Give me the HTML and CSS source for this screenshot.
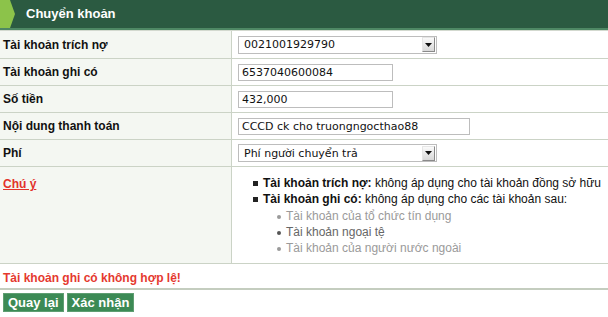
FILE: index.html
```html
<!DOCTYPE html>
<html lang="vi">
<head>
    <meta charset="UTF-8">
    <title>Chuyển khoản</title>
    <meta name="viewport" content="width=device-width, initial-scale=1.0">
    <link rel="stylesheet" href="styles.css">
</head>
<body>
    <div class="panel-head">
        <span class="tab"></span>
        <h2>Chuyển khoản</h2>
    </div>
    <div class="form">
        <div class="row first">
            <div class="label">Tài khoản trích nợ</div>
            <div class="value">
                <div class="select wide">
                    <span>0021001929790</span>
                    <span class="arrow"><svg width="7" height="4" viewBox="0 0 7 4"><path d="M0 0H7L3.5 4Z" fill="#111"/></svg></span>
                </div>
            </div>
        </div>
        <div class="row">
            <div class="label">Tài khoản ghi có</div>
            <div class="value"><input type="text" class="field" value="6537040600084"></div>
        </div>
        <div class="row">
            <div class="label">Số tiền</div>
            <div class="value"><input type="text" class="field" value="432,000"></div>
        </div>
        <div class="row">
            <div class="label">Nội dung thanh toán</div>
            <div class="value"><input type="text" class="field long" value="CCCD ck cho truongngocthao88"></div>
        </div>
        <div class="row">
            <div class="label">Phí</div>
            <div class="value">
                <div class="select wide">
                    <span>Phí người chuyển trả</span>
                    <span class="arrow"><svg width="7" height="4" viewBox="0 0 7 4"><path d="M0 0H7L3.5 4Z" fill="#111"/></svg></span>
                </div>
            </div>
        </div>
        <div class="row notes-row">
            <div class="label"><a href="#" class="note-link">Chú ý</a></div>
            <div class="value">
                <ul class="notes">
                    <li><b>Tài khoản trích nợ:</b> không áp dụng cho tài khoản đồng sở hữu</li>
                    <li><b>Tài khoản ghi có:</b> không áp dụng cho các tài khoản sau:
                        <ul class="sub">
                            <li>Tài khoản của tổ chức tín dụng</li>
                            <li class="dark">Tài khoản ngoại tệ</li>
                            <li>Tài khoản của người nước ngoài</li>
                        </ul>
                    </li>
                </ul>
            </div>
        </div>
    </div>
    <div class="error">Tài khoản ghi có không hợp lệ!</div>
    <div class="actions">
        <button type="button">Quay lại</button>
        <button type="button">Xác nhận</button>
    </div>
</body>
</html>
```

FILE: styles.css
```css
html { box-sizing: border-box; }
*, *:before, *:after { box-sizing: inherit; }
body {
    margin: 0;
    width: 608px;
    font-family: "Liberation Sans", Arial, sans-serif;
    font-size: 12px;
    color: #111;
    background: #fff;
}
.panel-head {
    position: relative;
    height: 30px;
    background: #2b5a41;
    border-bottom: 2px solid #4e8864;
}
.tab {
    position: absolute;
    left: 0;
    top: 0;
    width: 15px;
    height: 28px;
    background: #8cc34a;
    clip-path: polygon(0 0, 10px 0, 15px 14px, 10px 28px, 0 28px);
}
.panel-head h2 {
    margin: 0;
    padding-left: 26px;
    line-height: 28px;
    font-size: 13px;
    font-weight: bold;
    color: #fff;
}
.form {
    border-top: 1px solid #d3d9cf;
}
.row {
    display: grid;
    grid-template-columns: 232px 1fr;
    height: 27px;
    border-bottom: 1px solid #cbd3c6;
}
.row.first { height: 28px; }
.label {
    background: #f4f7f2;
    border-right: 1px solid #cbd3c6;
    padding-left: 3px;
    font-weight: bold;
    display: flex;
    align-items: center;
}
.value {
    padding-left: 6px;
    display: flex;
    align-items: center;
}
.field {
    width: 155px;
    height: 17px;
    margin: 0;
    padding: 0 3px;
    border: 1px solid #bdbdbd;
    font-family: "DejaVu Sans", Verdana, sans-serif;
    font-size: 11px;
    color: #111;
    background: #fff;
}
.field.long { width: 232px; }
.select {
    height: 18px;
    border: 1px solid #bdbdbd;
    display: flex;
    align-items: center;
    justify-content: space-between;
    padding-left: 5px;
    font-family: "DejaVu Sans", Verdana, sans-serif;
    font-size: 11px;
    color: #111;
    background: #fff;
}
.select.wide { width: 199px; }
.arrow {
    width: 13px;
    height: 15px;
    margin-right: 1px;
    background: linear-gradient(#fafafa, #d8d8d8);
    border: 1px solid #e6e6e6;
    border-right-color: #8a8a8a;
    border-bottom-color: #8a8a8a;
    display: flex;
    align-items: center;
    justify-content: center;
}
.notes-row { height: 97px; }
.notes-row .label,
.notes-row .value { align-items: flex-start; }
.notes-row .label { padding-top: 10px; }
.note-link {
    color: #e2332b;
    font-weight: bold;
}
.notes {
    margin: 0;
    padding: 8px 0 0 10px;
    list-style: none;
    line-height: 16.3px;
}
.notes > li {
    position: relative;
    padding-left: 15px;
}
.notes > li:before {
    content: "";
    position: absolute;
    left: 5px;
    top: 6px;
    width: 5px;
    height: 5px;
    background: #222;
}
.sub {
    margin: 0;
    padding: 0 0 0 15px;
    list-style: none;
    color: #9a9a9a;
}
.sub li {
    position: relative;
    padding-left: 8px;
}
.sub li:before {
    content: "";
    position: absolute;
    left: -1px;
    top: 7px;
    width: 4px;
    height: 4px;
    border-radius: 50%;
    background: #9a9a9a;
}
.sub li.dark { color: #666; }
.sub li.dark:before { background: #555; }
.error {
    height: 26px;
    padding: 7px 0 0 3px;
    color: #e5392f;
    font-weight: bold;
    border-bottom: 2px solid #c4cdbf;
}
.actions {
    padding: 3px 0 0 3px;
    display: flex;
    gap: 3px;
}
.actions button {
    height: 19px;
    padding: 0 4px;
    margin: 0;
    border: 1px solid #5f9e72;
    background: #3c8a55;
    color: #fff;
    font-family: "Liberation Sans", Arial, sans-serif;
    font-size: 13px;
    font-weight: bold;
    cursor: pointer;
}
```
